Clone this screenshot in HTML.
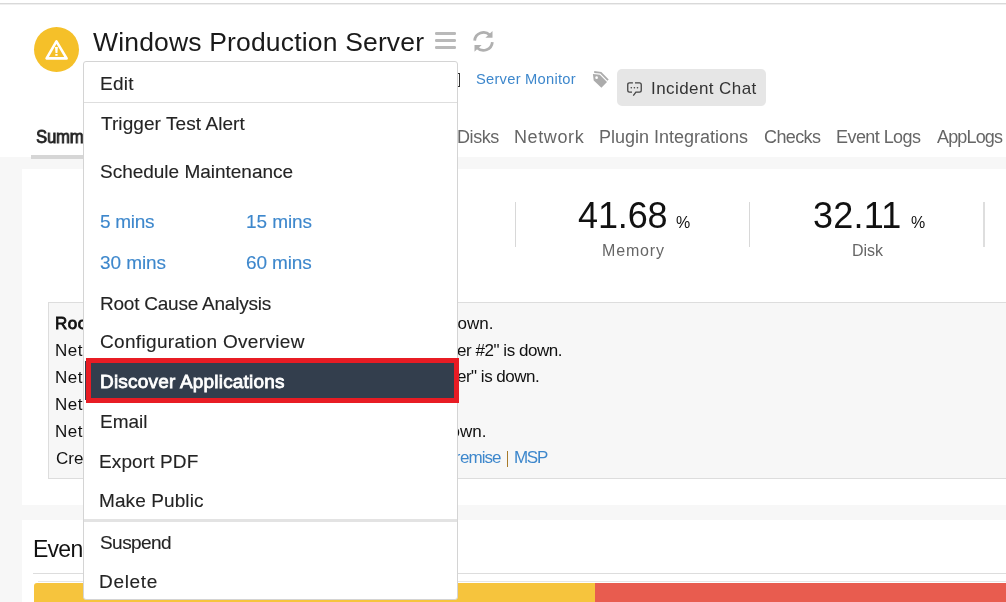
<!DOCTYPE html>
<html><head><meta charset="utf-8">
<style>
html,body{margin:0;padding:0;}
body{width:1006px;height:602px;overflow:hidden;position:relative;background:#fff;font-family:"Liberation Sans",sans-serif;}
.a{position:absolute;}
.t{position:absolute;white-space:nowrap;line-height:1;will-change:transform;}
</style></head><body>
<!-- top line -->
<div class="a" style="left:0;top:3px;width:1006px;height:1px;background:#d9d9d9"></div>
<div class="a" style="left:0;top:4px;width:1006px;height:1px;background:#efefef"></div>
<!-- warning circle -->
<div class="a" style="left:34px;top:27px;width:45px;height:45px;border-radius:50%;background:#f5c029"></div>
<svg class="a" style="left:0;top:0" width="1006" height="602" viewBox="0 0 1006 602">
  <path d="M56.45 41.3 L46.6 58.4 L66.6 58.4 Z" fill="none" stroke="#fff" stroke-width="2.6" stroke-linejoin="round"/>
  <path d="M55.0 47.0 L57.9 47.0 L57.4 53.0 L55.5 53.0 Z" fill="#fff"/>
  <rect x="55.3" y="54" width="2.3" height="1.8" fill="#fff"/>
</svg>
<!-- hamburger -->
<div class="a" style="left:435px;top:31.6px;width:20.8px;height:3.3px;border-radius:1.2px;background:#b9b9b9"></div>
<div class="a" style="left:435px;top:38.5px;width:20.8px;height:3.3px;border-radius:1.2px;background:#b9b9b9"></div>
<div class="a" style="left:435px;top:45.5px;width:20.8px;height:3.3px;border-radius:1.2px;background:#b9b9b9"></div>
<!-- refresh -->
<svg class="a" style="left:472px;top:29px" width="24" height="25" viewBox="0 0 24 25">
  <path d="M2.65 11.7 A8.9 8.9 0 0 1 17.8 6.1" fill="none" stroke="#b0b0b0" stroke-width="2.8"/>
  <path d="M20.5 2 L20.5 8.8 L13.4 8.8 Z" fill="#b0b0b0"/>
  <path d="M20.35 13.1 A8.9 8.9 0 0 1 5.2 18.7" fill="none" stroke="#b0b0b0" stroke-width="2.8"/>
  <path d="M2.5 16.1 L9.6 16.1 L2.5 22.8 Z" fill="#b0b0b0"/>
</svg>
<!-- ] -->
<div class="a" style="left:458px;top:72.5px;width:2px;height:14px;border:1.5px solid #333;border-left:none;box-sizing:border-box;"></div>
<!-- tag icon -->
<svg class="a" style="left:588px;top:66px" width="24" height="26" viewBox="0 0 24 26">
  <path d="M4.9 8.0 L11.8 8.7 L19.0 16.0 L13.4 21.8 L5.7 14.4 Z M7.25 11.7 a1.35 1.35 0 1 0 2.7 0 a1.35 1.35 0 1 0 -2.7 0 Z" fill="#acacac" fill-rule="evenodd"/>
  <path d="M6.2 5.1 L13.3 6.0 L20.7 13.4 L19.4 14.7 L12.2 7.6 L6.2 6.9 Z" fill="#acacac"/>
</svg>
<!-- incident chat button -->
<div class="a" style="left:617px;top:69px;width:149px;height:36.5px;border-radius:5px;background:#e6e6e6"></div>
<svg class="a" style="left:620px;top:76px" width="26" height="24" viewBox="0 0 26 24">
  <path d="M12.9 6.85 L9.6 6.85 Q7.75 6.85 7.75 8.7 L7.75 14.35 Q7.75 16.2 9.6 16.2 L12.0 16.2" fill="none" stroke="#444" stroke-width="1.3"/>
  <path d="M15.0 6.85 L19.4 6.85 Q21.25 6.85 21.25 8.7 L21.25 14.35 Q21.25 16.2 19.4 16.2 L15.9 16.2 L13.3 19.7" fill="none" stroke="#444" stroke-width="1.3"/>
  <circle cx="11.3" cy="11.7" r="0.8" fill="#444"/><circle cx="14.4" cy="11.7" r="0.8" fill="#444"/><circle cx="17.5" cy="11.7" r="0.8" fill="#444"/>
</svg>
<!-- gray background band -->
<div class="a" style="left:0;top:157px;width:1006px;height:445px;background:#f7f7f7"></div>
<!-- tab underline -->
<div class="a" style="left:31px;top:155px;width:60px;height:4px;background:#d6d6d6"></div>
<!-- card 1 -->
<div class="a" style="left:22px;top:168.5px;width:990px;height:336px;background:#fff"></div>
<!-- dividers -->
<div class="a" style="left:281px;top:202px;width:1px;height:45px;background:#d8d8d8"></div>
<div class="a" style="left:515px;top:202px;width:1px;height:45px;background:#d8d8d8"></div>
<div class="a" style="left:749px;top:202px;width:1px;height:45px;background:#d8d8d8"></div>
<div class="a" style="left:983px;top:202px;width:2px;height:45px;background:#dedede"></div>
<!-- root cause box -->
<div class="a" style="left:48px;top:302px;width:990px;height:177px;background:#f7f7f7;border:1px solid #dddddd;box-sizing:border-box"></div>
<!-- card 2 -->
<div class="a" style="left:22px;top:520px;width:990px;height:100px;background:#fff"></div>
<div class="a" style="left:33px;top:573px;width:980px;height:1px;background:#dddddd"></div>
<div class="a" style="left:38px;top:581px;width:980px;height:1px;background:#e6e6e6"></div>
<div class="a" style="left:34px;top:583px;width:562px;height:30px;background:#f6c43d;border-top-left-radius:3px"></div>
<div class="a" style="left:595px;top:583px;width:420px;height:30px;background:#e85c4f"></div>
<div class="a" style="left:507px;top:451px;width:1.4px;height:15.5px;background:#a87a2a"></div>
<div class="t" style="top:29.00px;font-size:26.5px;color:#1a1a1a;letter-spacing:0.169px;left:92.80px;">Windows Production Server</div>
<div class="t" style="top:72.00px;font-size:14.7px;color:#3d87cc;letter-spacing:0.252px;left:476.30px;">Server Monitor</div>
<div class="t" style="top:80.00px;font-size:17px;color:#333;letter-spacing:0.421px;left:650.50px;">Incident Chat</div>
<div class="t" style="top:128.00px;font-size:18.5px;color:#222;-webkit-text-stroke:0.8px #222;left:35.80px;letter-spacing:-0.2px;transform:scaleX(0.9);transform-origin:0 0;">Summary</div>
<div class="t" style="top:128.00px;font-size:18px;color:#666;letter-spacing:-0.425px;left:456.70px;">Disks</div>
<div class="t" style="top:128.00px;font-size:18px;color:#666;letter-spacing:0.614px;left:514.00px;">Network</div>
<div class="t" style="top:128.00px;font-size:18px;color:#666;left:599.00px;">Plugin Integrations</div>
<div class="t" style="top:128.00px;font-size:18px;color:#666;letter-spacing:-0.604px;left:764.00px;">Checks</div>
<div class="t" style="top:128.00px;font-size:18px;color:#666;letter-spacing:-0.562px;left:836.00px;">Event Logs</div>
<div class="t" style="top:128.00px;font-size:18px;color:#666;letter-spacing:-0.843px;left:937.00px;">AppLogs</div>
<div class="t" style="top:198.00px;font-size:36px;color:#111;letter-spacing:-0.117px;left:578.00px;">41.68</div>
<div class="t" style="top:215.00px;font-size:16px;color:#111;left:676.00px;">%</div>
<div class="t" style="top:243.00px;font-size:16px;color:#666;letter-spacing:0.844px;left:602.00px;">Memory</div>
<div class="t" style="top:198.00px;font-size:36px;color:#111;letter-spacing:0.226px;left:812.70px;">32.11</div>
<div class="t" style="top:215.00px;font-size:16px;color:#111;left:910.50px;">%</div>
<div class="t" style="top:243.00px;font-size:16px;color:#666;letter-spacing:-0.036px;left:851.60px;">Disk</div>
<div class="t" style="top:315.00px;font-size:17px;color:#111;-webkit-text-stroke:0.8px #111;left:54.80px;letter-spacing:0.5px;">Root Cause : Windows</div>
<div class="t" style="top:342.00px;font-size:17px;color:#111;left:54.80px;letter-spacing:0.5px;">Network Interface "Adapter" is down.</div>
<div class="t" style="top:369.00px;font-size:17px;color:#111;left:54.80px;letter-spacing:0.5px;">Network Interface "Adapter" is down.</div>
<div class="t" style="top:396.00px;font-size:17px;color:#111;left:54.80px;letter-spacing:0.5px;">Network Interface "Adapter" is down.</div>
<div class="t" style="top:423.00px;font-size:17px;color:#111;left:54.80px;letter-spacing:0.5px;">Network Interface "Adapter" is down.</div>
<div class="t" style="top:450.00px;font-size:17px;color:#111;left:55.80px;">Created by Site24x7 </div>
<div class="t" style="top:315.00px;font-size:17px;color:#111;left:431.26px;">is down.</div>
<div class="t" style="top:342.00px;font-size:17px;color:#111;left:294.43px;">Adapter #2" is down.</div>
<div class="t" style="top:342.00px;font-size:17px;color:#111;letter-spacing:-0.453px;left:456.50px;">er #2" is down.</div>
<div class="t" style="top:368.00px;font-size:17px;color:#111;letter-spacing:-0.501px;left:456.50px;">er" is down.</div>
<div class="t" style="top:423.00px;font-size:17px;color:#111;left:424.36px;">is down.</div>
<div class="t" style="top:449.00px;font-size:17px;color:#3d87cc;left:414.52px;">On-Pr</div>
<div class="t" style="top:449.00px;font-size:17px;color:#3d87cc;letter-spacing:-0.948px;left:460.40px;">emise</div>
<div class="t" style="top:449.00px;font-size:17px;color:#3d87cc;letter-spacing:-1.300px;left:513.80px;">MSP</div>
<div class="t" style="top:538.00px;font-size:23px;color:#111;letter-spacing:-0.744px;left:33.10px;">Even</div>
<!-- dropdown menu -->
<div class="a" style="left:83px;top:61px;width:375px;height:539px;background:#fff;border:1px solid #d4d4d4;border-radius:3px;box-sizing:border-box"></div>
<div class="a" style="left:84px;top:102px;width:373px;height:1px;background:#dedede"></div>
<div class="a" style="left:84px;top:519px;width:373px;height:3px;background:#e3e3e3"></div>
<!-- highlighted item -->
<div class="a" style="left:85px;top:361px;width:370px;height:39px;background:#333e4d"></div>
<div class="a" style="left:86px;top:358px;width:373px;height:45px;border:5px solid #e81c24;box-sizing:border-box"></div>
<div class="t" style="top:74.00px;font-size:19px;color:#242424;-webkit-text-stroke:0.12px #242424;letter-spacing:0.246px;left:99.50px;">Edit</div>
<div class="t" style="top:114.00px;font-size:19px;color:#242424;-webkit-text-stroke:0.12px #242424;letter-spacing:0.072px;left:100.50px;">Trigger Test Alert</div>
<div class="t" style="top:162.00px;font-size:19px;color:#242424;-webkit-text-stroke:0.12px #242424;letter-spacing:-0.012px;left:99.80px;">Schedule Maintenance</div>
<div class="t" style="top:212.00px;font-size:19px;color:#3d87cc;-webkit-text-stroke:0.12px #3d87cc;letter-spacing:-0.272px;left:100.30px;">5 mins</div>
<div class="t" style="top:212.00px;font-size:19px;color:#3d87cc;-webkit-text-stroke:0.12px #3d87cc;letter-spacing:-0.088px;left:246.00px;">15 mins</div>
<div class="t" style="top:253.00px;font-size:19px;color:#3d87cc;-webkit-text-stroke:0.12px #3d87cc;letter-spacing:-0.071px;left:100.30px;">30 mins</div>
<div class="t" style="top:253.00px;font-size:19px;color:#3d87cc;-webkit-text-stroke:0.12px #3d87cc;letter-spacing:-0.138px;left:246.30px;">60 mins</div>
<div class="t" style="top:294.00px;font-size:19px;color:#242424;-webkit-text-stroke:0.12px #242424;letter-spacing:-0.226px;left:100.00px;">Root Cause Analysis</div>
<div class="t" style="top:332.00px;font-size:19px;color:#242424;-webkit-text-stroke:0.12px #242424;letter-spacing:0.331px;left:100.30px;">Configuration Overview</div>
<div class="t" style="top:372.00px;font-size:19px;color:#fff;-webkit-text-stroke:0.8px #fff;letter-spacing:0.198px;left:99.50px;">Discover Applications</div>
<div class="t" style="top:412.00px;font-size:19px;color:#242424;-webkit-text-stroke:0.12px #242424;left:99.50px;">Email</div>
<div class="t" style="top:452.00px;font-size:19px;color:#242424;-webkit-text-stroke:0.12px #242424;letter-spacing:0.124px;left:99.30px;">Export PDF</div>
<div class="t" style="top:491.00px;font-size:19px;color:#242424;-webkit-text-stroke:0.12px #242424;letter-spacing:0.101px;left:99.30px;">Make Public</div>
<div class="t" style="top:533.00px;font-size:19px;color:#242424;-webkit-text-stroke:0.12px #242424;letter-spacing:-0.557px;left:100.00px;">Suspend</div>
<div class="t" style="top:572.00px;font-size:19px;color:#242424;-webkit-text-stroke:0.12px #242424;letter-spacing:0.669px;left:99.30px;">Delete</div>
</body></html>
